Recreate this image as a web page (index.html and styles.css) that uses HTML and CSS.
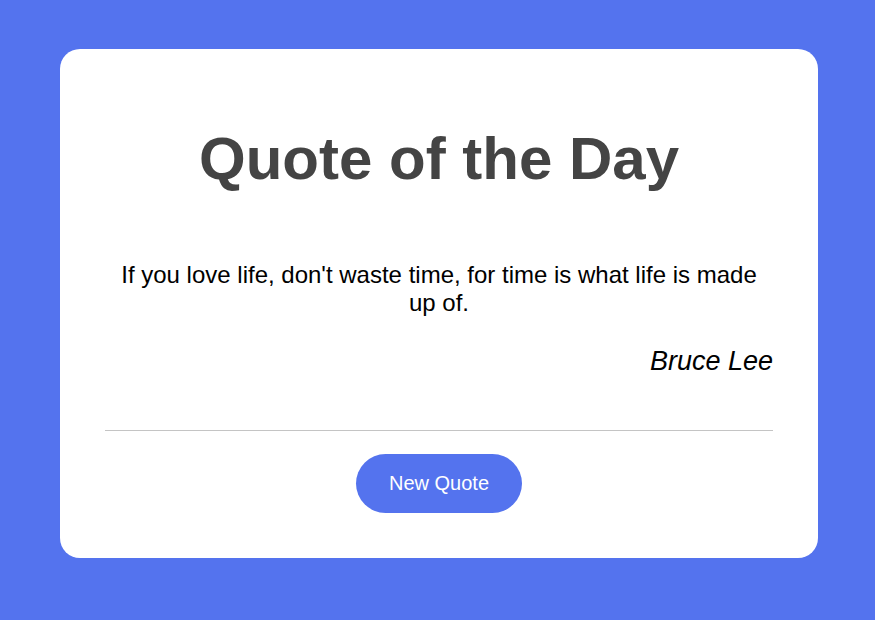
FILE: index.html
```html
<!DOCTYPE html>
<html lang="en">
<head>
<meta charset="utf-8">
<title>Quote of the Day</title>
<link rel="stylesheet" href="styles.css">
</head>
<body>
<main class="card">
  <h1 class="title">Quote of the Day</h1>
  <p class="quote">If you love life, don't waste time, for time is what life is made up of.</p>
  <p class="author">Bruce Lee</p>
  <hr class="divider">
  <div class="actions">
    <button class="btn" type="button">New Quote</button>
  </div>
</main>
</body>
</html>
```
FILE: styles.css
```css
html, body {
  margin: 0;
  padding: 0;
}
body {
  background: #5473ee;
  font-family: "Liberation Sans", Arial, sans-serif;
  padding: 49px 57px 0 60px;
  height: 620px;
  box-sizing: border-box;
}
.card {
  background: #ffffff;
  border-radius: 20px;
  width: 758px;
  height: 509px;
  box-sizing: border-box;
  padding: 75px 45px 45px;
}
.title {
  margin: 0;
  font-size: 60px;
  line-height: 69px;
  font-weight: 700;
  color: #444444;
  text-align: center;
}
.quote {
  margin: 68px 0 0;
  font-size: 24px;
  line-height: 28px;
  color: #000;
  text-align: center;
}
.author {
  margin: 30px 0 0;
  font-size: 27px;
  line-height: 28px;
  font-style: italic;
  color: #000;
  text-align: right;
}
.divider {
  margin: 55px 0 0;
  border: 0;
  border-top: 1px solid #c4c4c4;
  height: 0;
}
.actions {
  display: flex;
  justify-content: center;
  margin-top: 23px;
}
.btn {
  width: 166px;
  height: 59px;
  border: 0;
  border-radius: 30px;
  background: #5473ee;
  color: #ffffff;
  font-family: "Liberation Sans", Arial, sans-serif;
  font-size: 20px;
  cursor: pointer;
}
```
